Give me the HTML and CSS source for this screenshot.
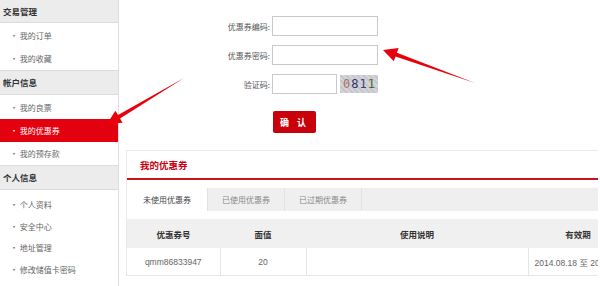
FILE: index.html
```html
<!DOCTYPE html>
<html lang="zh-CN">
<head>
    <meta charset="UTF-8">
    <title>我的优惠券</title>
    <link rel="stylesheet" href="styles.css">
</head>
<body>

<div class="page">
    <!-- Sidebar -->
    <aside class="sidebar">
        <div class="menu-title">交易管理</div>
        <ul class="menu-list">
            <li><a href="#">· 我的订单</a></li>
            <li><a href="#">· 我的收藏</a></li>
        </ul>
        <div class="menu-title">帐户信息</div>
        <ul class="menu-list">
            <li><a href="#">· 我的良票</a></li>
            <li class="active"><a href="#">· 我的优惠券</a></li>
            <li><a href="#">· 我的预存款</a></li>
        </ul>
        <div class="menu-title">个人信息</div>
        <ul class="menu-list tight">
            <li><a href="#">· 个人资料</a></li>
            <li><a href="#">· 安全中心</a></li>
            <li><a href="#">· 地址管理</a></li>
            <li><a href="#">· 修改储值卡密码</a></li>
        </ul>
    </aside>

    <!-- Main -->
    <main class="main">
        <form class="coupon-form">
            <label>优惠券编码:</label>
            <input type="text" class="field">
            <label>优惠券密码:</label>
            <input type="password" class="field">
            <label>验证码:</label>
            <div class="captcha-row">
                <input type="text" class="field short">
                <span class="captcha"><b class="c0">0</b><b class="c1">8</b><b class="c2">1</b><b class="c3">1</b></span>
            </div>
            <span></span>
            <button type="button" class="btn">确 认</button>
        </form>

        <div class="box">
            <h2 class="box-title">我的优惠券</h2>
            <div class="tabs">
                <span class="tab current">未使用优惠券</span>
                <span class="tab">已使用优惠券</span>
                <span class="tab">已过期优惠券</span>
            </div>
            <table class="coupon-table">
                <thead>
                    <tr>
                        <th class="col-no">优惠券号</th>
                        <th class="col-val">面值</th>
                        <th class="col-desc">使用说明</th>
                        <th class="col-date">有效期</th>
                    </tr>
                </thead>
                <tbody>
                    <tr>
                        <td>qmm86833947</td>
                        <td>20</td>
                        <td></td>
                        <td class="date">2014.08.18 至 20</td>
                    </tr>
                </tbody>
            </table>
        </div>
    </main>

    <!-- Annotation arrows -->
    <svg class="arrows" width="600" height="286" viewBox="0 0 600 286">
        <polygon points="184,78 120,118.5 122.6,122.8 107,124 115.4,110.8 118,115.1" />
        <polygon points="475,83 395.5,56.6 393.8,61.3 383,50 398.6,48.1 396.9,52.8" />
    </svg>
</div>

</body>
</html>
```

FILE: styles.css
```css
body {
    margin: 0;
    padding: 0;
    background-color: #fff;
    font-family: "Noto Sans CJK SC", "Liberation Sans", sans-serif;
    color: #555;
}
.page {
    position: relative;
    display: flex;
    width: 600px;
    height: 286px;
    overflow: hidden;
}

/* sidebar */
.sidebar {
    width: 118px;
    flex-shrink: 0;
    border-right: 1px solid #dedede;
}
.menu-title {
    height: 23px;
    line-height: 23px;
    padding-left: 3px;
    background-color: #ececec;
    border-bottom: 1px solid #dcdcdc;
    font-size: 8.5px;
    font-weight: bold;
    color: #333;
}
.menu-title:first-child {
    height: 22px;
    line-height: 22px;
}
.menu-list {
    list-style: none;
    margin: 0;
    padding: 1px 0 0;
    border-bottom: 1px solid #dcdcdc;
}
.menu-list li {
    height: 23px;
    line-height: 23px;
}
.menu-list.tight {
    padding-top: 4px;
    border-bottom: 0;
}
.menu-list.tight li {
    height: 21.5px;
    line-height: 21.5px;
}
.menu-list a {
    display: block;
    padding-left: 10px;
    font-size: 8px;
    color: #666;
    text-decoration: none;
}
.menu-list li.active {
    background-color: #e3000f;
}
.menu-list li.active a {
    color: #fff;
}

/* main */
.main {
    flex: 1;
    min-width: 0;
    padding: 16px 2px 0 7px;
}
.coupon-form {
    display: grid;
    grid-template-columns: 144px 108px;
    column-gap: 2px;
    row-gap: 9px;
    align-items: center;
}
.coupon-form label {
    text-align: right;
    font-size: 8px;
    color: #555;
}
.field {
    box-sizing: border-box;
    width: 106px;
    height: 20px;
    margin: 0;
    border: 1px solid #c9c9c9;
    background: #fff;
}
.field.short {
    width: 65px;
}
.captcha-row {
    display: flex;
    align-items: center;
    gap: 3px;
}
.captcha {
    display: inline-flex;
    align-items: center;
    justify-content: center;
    gap: 1px;
    width: 38px;
    height: 18px;
    background: repeating-linear-gradient(45deg, #c6c7cf 0 2px, #d4d4da 2px 4px);
    font-family: "DejaVu Sans Mono", monospace;
    font-size: 12px;
}
.captcha b { font-weight: normal; }
.captcha .c0 { color: #a87060; }
.captcha .c1 { color: #2e3566; }
.captcha .c2 { color: #3a4170; }
.captcha .c3 { color: #4a6a20; }
.btn {
    width: 43px;
    height: 22px;
    margin: 8px 0 0 1px;
    padding: 0;
    border: 0;
    border-radius: 2px;
    background-color: #c7000b;
    color: #fff;
    font-family: inherit;
    font-size: 9px;
    font-weight: bold;
    letter-spacing: 3px;
}

/* coupon box */
.box {
    margin-top: 17px;
    border-top: 1px solid #e8e8e8;
    border-left: 1px solid #e8e8e8;
    overflow: hidden;
}
.box-title {
    margin: 0;
    height: 27px;
    line-height: 28px;
    padding-left: 13px;
    border-bottom: 2px solid #c9161d;
    font-size: 9.5px;
    color: #c9000f;
}
.tabs {
    display: flex;
    margin-top: 8px;
    height: 23px;
    background-color: #efefef;
}
.tab {
    width: 76px;
    line-height: 23px;
    text-align: center;
    font-size: 8px;
    color: #888;
    border-right: 1px solid #e2e2e2;
}
.tab.current {
    width: 80px;
    background-color: #fff;
    color: #444;
}
.coupon-table {
    margin-top: 8px;
    border-collapse: collapse;
    width: 493px;
    table-layout: fixed;
    font-size: 8.5px;
}
.coupon-table th {
    height: 27px;
    background-color: #f0f0f0;
    color: #333;
    font-weight: bold;
}
.coupon-table td {
    height: 25px;
    text-align: center;
    color: #666;
    border-right: 1px solid #e6e6e6;
    border-bottom: 1px solid #e6e6e6;
    white-space: nowrap;
    font-family: "Liberation Sans", "Noto Sans CJK SC", sans-serif;
}
.coupon-table td.date {
    text-align: left;
    padding-left: 6px;
}
.col-no { width: 91px; }
.col-val { width: 84px; }
.col-desc { width: 220px; }
.col-date { width: 98px; }

/* arrows */
.arrows {
    position: absolute;
    top: 0;
    left: 0;
    pointer-events: none;
}
.arrows polygon {
    fill: #e8000b;
}
```
